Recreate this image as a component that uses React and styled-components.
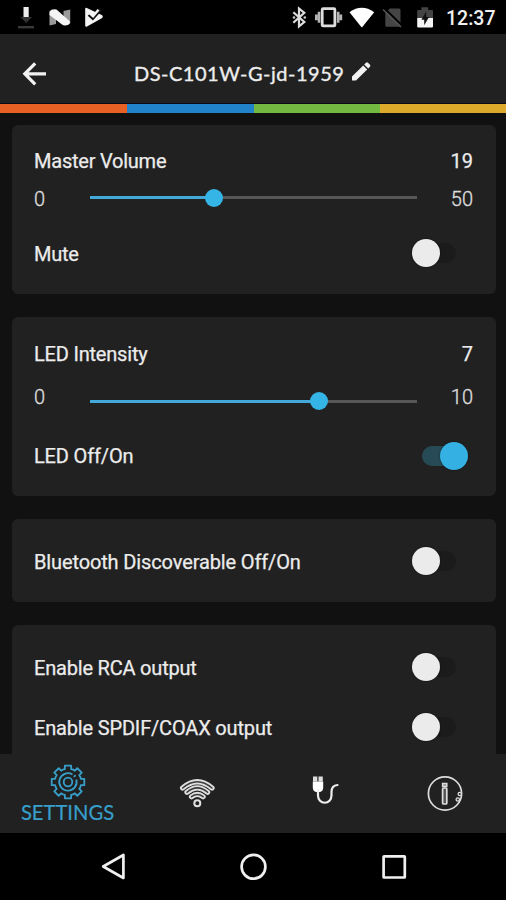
import React from "react";
import styled, { createGlobalStyle } from "styled-components";

const Global = createGlobalStyle`
  * { box-sizing: border-box; }
  html, body { margin: 0; background: #000; }
  body { font-family: Roboto, "Liberation Sans", sans-serif; overflow: hidden; }
`;

const Screen = styled.div`
  width: 506px;
  height: 900px;
  display: flex;
  flex-direction: column;
  background: #111;
  color: #ececec;
  overflow: hidden;
`;

const StatusBar = styled.header`
  height: 34px;
  flex: none;
  display: flex;
  align-items: center;
  background: #000;
`;

const Glyph = styled.svg`
  flex: none;
  display: block;
  margin-left: ${(p) => p.$gap || 0}px;
  overflow: visible;
`;

const Clock = styled.span`
  margin-left: 13px;
  font-size: 19.5px;
  line-height: 34px;
  font-weight: 500;
  color: #f0f0f0;
  padding-top: 4px;
`;

const TitleBar = styled.div`
  height: 70px;
  flex: none;
  display: flex;
  align-items: center;
  padding-top: 9px;
  background: #212121;
  border-bottom: 1px solid #0c0a14;
`;

const Title = styled.h1`
  margin: 0 0 0 87px;
  width: 211px;
  font-family: Lato, sans-serif;
  font-size: 20px;
  font-weight: 400;
  letter-spacing: 0.5px;
  white-space: nowrap;
  color: #ededed;
  -webkit-text-stroke: 0.35px #ededed;
`;

const Stripe = styled.div`
  height: 9px;
  flex: none;
  display: grid;
  grid-template-columns: 127px 127px 126px 1fr;
`;

const Band = styled.span`
  background: ${(p) => p.$color};
`;

const Content = styled.main`
  flex: 1;
  min-height: 0;
  overflow: hidden;
  display: flex;
  flex-direction: column;
  gap: 23px;
  padding: 12px 10px 0 12px;
`;

const Card = styled.section`
  flex: none;
  height: ${(p) => p.$height}px;
  padding: ${(p) => p.$top}px 23px 0 22px;
  border-radius: 6px;
  background: #212121;
`;

const Row = styled.div`
  height: ${(p) => p.$height}px;
  display: flex;
  align-items: center;
  justify-content: space-between;
`;

const Label = styled.span`
  font-size: 20px;
  line-height: 24px;
  white-space: nowrap;
  padding-top: ${(p) => p.$drop || 0}px;
  letter-spacing: ${(p) => p.$track || 0}px;
  -webkit-text-stroke: 0.25px #ececec;
`;

const Bound = styled.span`
  width: ${(p) => p.$width}px;
  font-size: 20px;
  line-height: 24px;
  font-weight: 300;
  color: #dcdcdc;
  -webkit-text-stroke: 0.35px #dcdcdc;
  text-align: ${(p) => p.$align || "left"};
`;

const Track = styled.div`
  width: 327px;
  height: 3px;
  display: flex;
  align-items: center;
  background: #565656;
  margin-top: ${(p) => p.$shift}px;
`;

const Fill = styled.div`
  height: 3px;
  width: ${(p) => p.$value}px;
  flex: none;
  background: #42a9d8;
`;

const Thumb = styled.div`
  width: 18px;
  height: 18px;
  margin-left: -9px;
  flex: none;
  border-radius: 50%;
  background: #35b4e6;
`;

const Toggle = styled.button`
  width: 63px;
  height: 30px;
  padding: 0 5px 0 2px;
  border: 0;
  background: none;
  display: flex;
  align-items: center;
  justify-content: ${(p) => (p.$on ? "flex-end" : "flex-start")};
`;

const Groove = styled.span`
  width: ${(p) => (p.$on ? 46 : 44)}px;
  height: 20px;
  display: flex;
  align-items: center;
  justify-content: ${(p) => (p.$on ? "flex-end" : "flex-start")};
  border-radius: 10px;
  background: ${(p) => (p.$on ? "#264a56" : "#1b1b1b")};
`;

const Knob = styled.span`
  width: 28px;
  height: 28px;
  flex: none;
  border-radius: 50%;
  background: ${(p) => (p.$on ? "#34b0e2" : "#ebebeb")};
  box-shadow: 0 0 2px rgba(0, 0, 0, 0.6);
`;

const TabBar = styled.nav`
  height: 79px;
  flex: none;
  display: grid;
  grid-template-columns: 135px 124px 132px 1fr;
  background: #212121;
`;

const Tab = styled.div`
  display: flex;
  flex-direction: column;
  align-items: center;
  justify-content: flex-start;
  padding-top: ${(p) => p.$top}px;
  padding-right: ${(p) => p.$right || 0}px;
`;

const TabLabel = styled.span`
  font-family: Lato, sans-serif;
  font-size: 20.2px;
  line-height: 24px;
  color: #379fca;
  white-space: nowrap;
  -webkit-text-stroke: 0.2px #379fca;
`;

const SystemNav = styled.footer`
  height: 67px;
  flex: none;
  display: flex;
  align-items: center;
  background: #000;
`;

function Switch({ on }) {
  return (
    <Toggle $on={on} role="switch" aria-checked={!!on}>
      <Groove $on={on}>
        <Knob $on={on} />
      </Groove>
    </Toggle>
  );
}

function SliderRow({ max, value, shift = 0, height }) {
  return (
    <Row $height={height}>
      <Bound $width={56}>0</Bound>
      <Track $shift={shift}>
        <Fill $value={value} />
        <Thumb />
      </Track>
      <Bound $width={56} $align="right">{max}</Bound>
    </Row>
  );
}

const gear = (() => {
  const pts = [];
  for (let i = 0; i < 8; i++) {
    const a = (i * Math.PI) / 4 - Math.PI / 2;
    [[-0.39, 13.4], [-0.24, 13.2], [-0.19, 16.6], [0.19, 16.6], [0.24, 13.2]].forEach(([d, r]) =>
      pts.push(`${(Math.cos(a + d) * r).toFixed(2)},${(Math.sin(a + d) * r).toFixed(2)}`)
    );
  }
  return pts.join(" ");
})();

const waves =
  "M182.6 788Q197.3 775.5 212 788M187 792.3Q197.3 783.500 207.600 792.300M191.500 796.700Q197.300 792.200 203.100 796.700";

export default function App() {
  return (
    <Screen>
      <Global />
      <StatusBar>
        <Glyph $gap={18} width="16" height="34" viewBox="18 0 16 34">
          <path d="M20.500 17H32l-5.800 6z" fill="#333" />
          <path d="M23.500 7h5.200v10h-5.200z" fill="#eee" />
          <path d="M18 26h16v2.400H18z" fill="#393939" />
        </Glyph>
        <Glyph $gap={15} width="22" height="34" viewBox="49 0 22 34">
          <path d="M49.500 11l3-1.800L56 12v12l-6.500 1.500zM63.500 11l6.700-1.600v14l-3 1.800-3.700-3z" fill="#999" />
          <path d="M49.500 12q2-3.500 7-2.500L70 21.500q0 3.500-4.500 4-2 .2-3.500-1L49.500 15z" fill="#f5f5f5" />
        </Glyph>
        <Glyph $gap={13} width="20" height="34" viewBox="84 0 20 34">
          <path d="M85.200 9q0-1.600 1.600-1l15.400 7.200q1.200 1.200 0 2.700L87 26.600q-1.800.7-1.800-1z" fill="#f4f4f4" />
          <path d="M89 14.500l3.800 3.500 8-9" fill="none" stroke="#111" strokeWidth="3.600" />
          <path d="M89.500 13.200l3.500 3 5.500-6.500" fill="none" stroke="#f4f4f4" strokeWidth="2.400" />
        </Glyph>
        <Glyph $gap={188} width="14" height="34" viewBox="292 0 14 34">
          <path d="M293.300 12.200l11 9.800-5.300 4.400V8.500l5.300 4.400-11 9.800" fill="none" stroke="#ddd" strokeWidth="2.200" />
          <circle cx="294" cy="17.500" r="1.300" fill="#ccc" />
          <circle cx="304.800" cy="17.500" r="1.300" fill="#ccc" />
        </Glyph>
        <Glyph $gap={9} width="28" height="34" viewBox="315 0 28 34">
          <rect x="322.200" y="8.700" width="12.700" height="17.200" rx="1" fill="none" stroke="#ddd" strokeWidth="2.800" />
          <path d="M319 11.700v11M316.300 14.500v5.800M338.200 11.700v11M340.900 14.500v5.800" stroke="#b4b4b4" strokeWidth="2.600" />
        </Glyph>
        <Glyph $gap={7} width="24" height="34" viewBox="350 0 24 34">
          <path d="M349.500 12.200Q361.700 3.500 374.200 12.200L362.300 27q-.5.6-1 0z" fill="#fff" />
        </Glyph>
        <Glyph $gap={9} width="18" height="34" viewBox="383 0 18 34">
          <path d="M385.300 13l4.500-4.500H399q1.500 0 1.500 1.500v15.500q0 1.200-1.500 1.200h-12.500q-1.200 0-1.200-1.200z" fill="#454545" />
          <path d="M384.500 8.500l17 16.500" stroke="#000" strokeWidth="2" />
          <path d="M383 9.500L401 27" stroke="#555" strokeWidth="1.500" />
        </Glyph>
        <Glyph $gap={16} width="16" height="34" viewBox="417 0 16 34">
          <path d="M418 10h3.400V7.200h6.800V10h4q.8 0 .8 1v7h-15.800v-7q0-1 .8-1z" fill="#444" />
          <path d="M417.200 18H433v8.500q0 1.100-1.200 1.100h-13.400q-1.200 0-1.200-1.100z" fill="#f4f4f4" />
          <path d="M426.200 11.500l-4.800 8.300h2.800v5.500l4.800-8.400h-2.800z" fill="#111" />
        </Glyph>
        <Clock>12:37</Clock>
      </StatusBar>

      <TitleBar>
        <Glyph $gap={23} width="24" height="24" viewBox="23 61 24 24">
          <path d="M46 73.800H25M35.200 63.300L24.800 73.800l10.400 10.500" fill="none" stroke="#f2f2f2" strokeWidth="3.200" />
        </Glyph>
        <Title>DS-C101W-G-jd-1959</Title>
        <Glyph $gap={6} width="20" height="24" viewBox="351 61 20 24">
          <path d="M352 80.500v-4L363.200 65.500l4 4L356 80.500zM364.200 64.500l1.800-1.800q1-.8 2 0l2 2q.8 1 0 2l-1.800 1.800z" fill="#f2f2f2" />
        </Glyph>
      </TitleBar>
      <Stripe>
        <Band $color="#e96024" />
        <Band $color="#2184cb" />
        <Band $color="#72b841" />
        <Band $color="#dca92b" />
      </Stripe>

      <Content>
        <Card $height={169} $top={23}>
          <Row $height={25}>
            <Label $track={-0.23}>Master Volume</Label>
            <Label>19</Label>
          </Row>
          <SliderRow height={52} max="50" value={124} shift={-3} />
          <Row $height={56}>
            <Label $track={-0.25} $drop={2}>Mute</Label>
            <Switch />
          </Row>
        </Card>
        <Card $height={179} $top={24}>
          <Row $height={25}>
            <Label $track={-0.2}>LED Intensity</Label>
            <Label>7</Label>
          </Row>
          <SliderRow height={62} max="10" value={229} shift={8} />
          <Row $height={55}>
            <Label $track={-0.15}>LED Off/On</Label>
            <Switch on />
          </Row>
        </Card>
        <Card $height={83} $top={12}>
          <Row $height={60}>
            <Label $track={-0.13} $drop={2}>Bluetooth Discoverable Off/On</Label>
            <Switch />
          </Row>
        </Card>
        <Card $height={160} $top={12}>
          <Row $height={60}>
            <Label $track={-0.2} $drop={1}>Enable RCA output</Label>
            <Switch />
          </Row>
          <Row $height={60}>
            <Label $track={-0.17} $drop={2}>Enable SPDIF/COAX output</Label>
            <Switch />
          </Row>
        </Card>
      </Content>

      <TabBar>
        <Tab $top={10}>
          <Glyph width="36" height="36" viewBox="-18 -18 36 36">
            <g fill="none" stroke="#379fca" strokeWidth="1.800" strokeLinejoin="round">
              <polygon points={gear} />
              <path d="M4.500-7.500A8.700 8.700 0 1 0 8.300-2.500" />
              <circle r="4.300" />
              <path d="M6.300-5.600l.8-.8" strokeLinecap="round" />
            </g>
          </Glyph>
          <TabLabel>SETTINGS</TabLabel>
        </Tab>
        <Tab $top={24}>
          <Glyph width="36" height="30" viewBox="179 778 36 30">
            <g fill="none" strokeLinecap="round">
              <path d={waves} stroke="#dedede" strokeWidth="5.200" />
              <path d={waves} stroke="#3a3a3a" strokeWidth="1.500" />
            </g>
            <circle cx="197.300" cy="803.300" r="3" fill="#212121" stroke="#e0e0e0" strokeWidth="2" />
          </Glyph>
        </Tab>
        <Tab $top={21}>
          <Glyph width="30" height="32" viewBox="310 775 30 32">
            <path d="M313 776.500h4.300v5H313zM318.500 776.500h4.300v5h-4.300z" fill="#ddd" />
            <path d="M312.800 781.500h10.400v6q0 3.500-3 4.500h-4.400q-3-1-3-4.500z" fill="#fff" />
            <path d="M318 790v5.500a6.500 7 0 0 0 13.500 0V792q0-6.500 6-7" fill="none" stroke="#eee" strokeWidth="2.200" strokeLinecap="round" />
          </Glyph>
        </Tab>
        <Tab $top={21} $right={7}>
          <Glyph width="36" height="36" viewBox="427 775 36 36">
            <circle cx="445" cy="793.500" r="16.600" fill="none" stroke="#ddd" strokeWidth="1.700" />
            <rect x="442.600" y="788" width="4.200" height="16" rx="1" fill="#555" stroke="#ddd" strokeWidth="1.700" />
            <path d="M442.600 783.500h4.200v3h-4.200z" fill="#888" stroke="#ddd" strokeWidth="1.500" />
            <circle cx="459.800" cy="794" r="1.700" fill="#333" stroke="#ddd" strokeWidth="1.300" />
            <circle cx="457.800" cy="799.500" r="1.700" fill="#333" stroke="#ddd" strokeWidth="1.300" />
          </Glyph>
        </Tab>
      </TabBar>

      <SystemNav>
        <Glyph $gap={101} width="25" height="30" viewBox="101 852 25 30">
          <path d="M123.400 855v23l-20.200-11.500z" fill="none" stroke="#f0f0f0" strokeWidth="2.700" strokeLinejoin="round" />
        </Glyph>
        <Glyph $gap={114} width="27" height="30" viewBox="240 852 27 30">
          <circle cx="253.500" cy="866.800" r="11.900" fill="none" stroke="#f0f0f0" strokeWidth="2.700" />
        </Glyph>
        <Glyph $gap={115} width="25" height="30" viewBox="382 852 25 30">
          <rect x="383.600" y="856.300" width="21.200" height="21.200" rx="0.500" fill="none" stroke="#f0f0f0" strokeWidth="2.700" />
        </Glyph>
      </SystemNav>
    </Screen>
  );
}
